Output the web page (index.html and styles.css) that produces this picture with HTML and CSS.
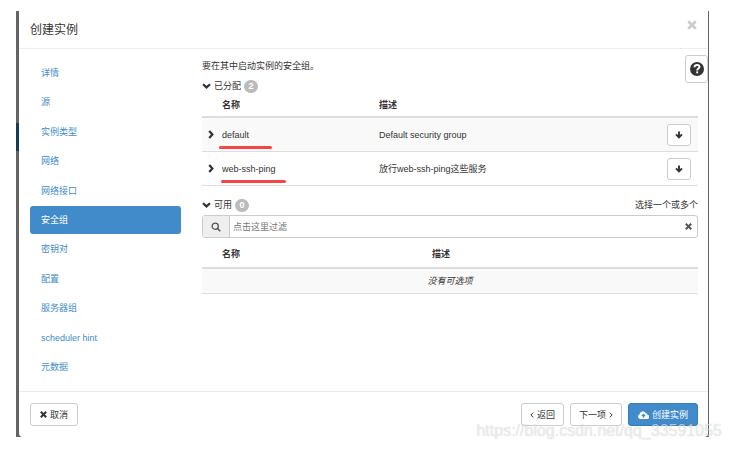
FILE: index.html
```html
<!DOCTYPE html>
<html lang="zh-CN">

    <head>
        <meta charset="UTF-8">
        <meta name="viewport" content="width=device-width, initial-scale=1.0">
        <title>创建实例</title>
        <link rel="stylesheet" href="styles.css">
    </head>

    <body>
        <div class="backdrop">
            <div class="modal">
                <header class="modal-header">
                    <h1>创建实例</h1>
                    <button type="button" class="close" aria-label="关闭">
                        <svg width="10" height="10" viewBox="0 0 10 10"><path d="M1.2 1.2l7.6 7.6M8.8 1.2L1.2 8.8" stroke="currentColor" stroke-width="2.8"/></svg>
                    </button>
                </header>

                <div class="modal-body">
                    <nav class="steps">
                        <a href="#">详情</a>
                        <a href="#">源</a>
                        <a href="#">实例类型</a>
                        <a href="#">网络</a>
                        <a href="#">网络接口</a>
                        <a href="#" class="active">安全组</a>
                        <a href="#">密钥对</a>
                        <a href="#">配置</a>
                        <a href="#">服务器组</a>
                        <a href="#">scheduler hint</a>
                        <a href="#">元数据</a>
                    </nav>

                    <main class="content">
                        <p class="intro">要在其中启动实例的安全组。</p>

                        <div class="section-title">
                            <svg width="9" height="6" viewBox="0 0 9 6"><path d="M1 1.2l3.5 3.2L8 1.2" fill="none" stroke="currentColor" stroke-width="2.2"/></svg>
                            <span>已分配</span>
                            <span class="badge">2</span>
                        </div>
                        <table class="allocated">
                            <thead>
                                <tr>
                                    <th class="expand"></th>
                                    <th class="name">名称</th>
                                    <th>描述</th>
                                    <th class="action"></th>
                                </tr>
                            </thead>
                            <tbody>
                                <tr class="odd">
                                    <td class="expand"><svg width="6" height="9" viewBox="0 0 6 9"><path d="M1.2 1l3.2 3.5L1.2 8" fill="none" stroke="currentColor" stroke-width="2.2"/></svg></td>
                                    <td class="name"><span class="marked">default</span></td>
                                    <td>Default security group</td>
                                    <td class="action">
                                        <button type="button" class="btn btn-move" aria-label="移除 default">
                                            <svg width="8" height="8" viewBox="0 0 8 8"><path d="M4 .4v6M1 3.4l3 3 3-3" fill="none" stroke="currentColor" stroke-width="1.9"/></svg>
                                        </button>
                                    </td>
                                </tr>
                                <tr>
                                    <td class="expand"><svg width="6" height="9" viewBox="0 0 6 9"><path d="M1.2 1l3.2 3.5L1.2 8" fill="none" stroke="currentColor" stroke-width="2.2"/></svg></td>
                                    <td class="name"><span class="marked marked-long">web-ssh-ping</span></td>
                                    <td>放行web-ssh-ping这些服务</td>
                                    <td class="action">
                                        <button type="button" class="btn btn-move" aria-label="移除 web-ssh-ping">
                                            <svg width="8" height="8" viewBox="0 0 8 8"><path d="M4 .4v6M1 3.4l3 3 3-3" fill="none" stroke="currentColor" stroke-width="1.9"/></svg>
                                        </button>
                                    </td>
                                </tr>
                            </tbody>
                        </table>

                        <div class="section-title section-available">
                            <svg width="9" height="6" viewBox="0 0 9 6"><path d="M1 1.2l3.5 3.2L8 1.2" fill="none" stroke="currentColor" stroke-width="2.2"/></svg>
                            <span>可用</span>
                            <span class="badge">0</span>
                            <span class="hint">选择一个或多个</span>
                        </div>
                        <div class="filter">
                            <label for="filter" aria-label="过滤">
                                <svg width="10" height="10" viewBox="0 0 10 10"><circle cx="4.2" cy="4.2" r="3.1" fill="none" stroke="currentColor" stroke-width="1.3"/><path d="M6.5 6.5l2.8 2.8" stroke="currentColor" stroke-width="1.6"/></svg>
                            </label>
                            <input type="text" id="filter" placeholder="点击这里过滤">
                            <button type="button" class="clear" aria-label="清除">
                                <svg width="7" height="7" viewBox="0 0 7 7"><path d="M.8 .8l5.4 5.4M6.2 .8L.8 6.2" stroke="currentColor" stroke-width="2"/></svg>
                            </button>
                        </div>
                        <table class="available">
                            <thead>
                                <tr>
                                    <th class="expand"></th>
                                    <th class="name">名称</th>
                                    <th>描述</th>
                                </tr>
                            </thead>
                            <tbody>
                                <tr class="odd">
                                    <td colspan="3" class="empty">没有可选项</td>
                                </tr>
                            </tbody>
                        </table>
                    </main>

                    <button type="button" class="btn help" aria-label="帮助">
                        <svg width="14" height="14" viewBox="0 0 14 14"><circle cx="7" cy="7" r="7" fill="currentColor"/><path d="M4.5 5.2c.1-1.5 1.1-2.2 2.5-2.2s2.5.8 2.5 2c0 1.6-2.3 1.6-2.3 3.4" fill="none" stroke="#fff" stroke-width="1.9"/><path d="M6.2 9.4h2v1.9h-2z" fill="#fff"/></svg>
                    </button>
                </div>

                <footer class="modal-footer">
                    <button type="button" class="btn cancel">
                        <svg width="7" height="7" viewBox="0 0 7 7"><path d="M.8 .8l5.4 5.4M6.2 .8L.8 6.2" stroke="currentColor" stroke-width="2"/></svg>
                        取消
                    </button>
                    <button type="button" class="btn">
                        <svg width="4" height="6" viewBox="0 0 4 6"><path d="M3.3 .6L.9 3l2.4 2.4" fill="none" stroke="currentColor"/></svg>
                        返回
                    </button>
                    <button type="button" class="btn">
                        下一项
                        <svg width="4" height="6" viewBox="0 0 4 6"><path d="M.7 .6L3.1 3 .7 5.4" fill="none" stroke="currentColor"/></svg>
                    </button>
                    <button type="submit" class="btn btn-primary">
                        <svg width="11" height="8" viewBox="0 0 11 8"><path d="M2.5 8A2.5 2.5 0 0 1 1.6 3.2 3.1 3.1 0 0 1 7.4 2 1.7 1.7 0 0 1 9.2 3.8 2.1 2.1 0 0 1 8.8 8z" fill="currentColor"/><path d="M5.5 2.4L3.2 4.9h1.5v1.9h1.6V4.9h1.5z" fill="#428bca"/></svg>
                        创建实例
                    </button>
                </footer>
            </div>
        </div>
        <div class="watermark">https://blog.csdn.net/qq_33591055</div>
    </body>

</html>
```

FILE: styles.css
```css
* {
    box-sizing: border-box;
}

body {
    margin: 0;
    padding: 11px 22px 12px 16px;
    position: relative;
    background: #fff;
    color: #333;
    font-family: "Liberation Sans", "Noto Sans CJK SC", sans-serif;
    font-size: 9px;
    line-height: 14px;
}

button,
input {
    font-family: inherit;
    font-size: inherit;
    line-height: inherit;
    color: inherit;
}

svg {
    display: block;
    flex: none;
}

.backdrop {
    border-right: 1px solid #646464;
    padding-left: 3px;
    background: linear-gradient(#646464 0 112px, #173b59 112px 140px, #646464 140px);
}

.modal {
    background: #fff;
    border-radius: 0 0 4px 4px;
}

.modal-header {
    display: flex;
    justify-content: space-between;
    align-items: center;
    height: 38px;
    padding: 0 11px;
    border-bottom: 1px solid #eee;
}

h1 {
    margin: 0;
    font-size: 12px;
    font-weight: normal;
    line-height: 16px;
}

.close,
.clear {
    display: flex;
    padding: 0;
    border: none;
    background: none;
    cursor: pointer;
}

.close {
    color: #ccc;
    margin-bottom: 10px;
}

.modal-body {
    position: relative;
    display: flex;
    gap: 21px;
    min-height: 342px;
    padding: 10px 10px 10px 11px;
}

.steps {
    display: flex;
    flex-direction: column;
    justify-content: space-between;
    flex: 0 0 151px;
}

.steps a {
    padding: 7px 11px;
    border-radius: 3px;
    color: #428bca;
    text-decoration: none;
}

.steps .active {
    background: #428bca;
    color: #fff;
}

.content {
    flex: 1;
}

.intro {
    margin: 0 0 6px;
}

.section-title {
    display: flex;
    align-items: center;
    gap: 3px;
}

.section-available {
    margin-top: 12px;
    margin-bottom: 3px;
}

.badge {
    min-width: 14px;
    padding: 0 4px;
    border-radius: 7px;
    background: #bbb;
    color: #fff;
    font-weight: bold;
    line-height: 13px;
    text-align: center;
}

.hint {
    margin-left: auto;
}

table {
    width: 100%;
    border-collapse: separate;
    border-spacing: 0;
    table-layout: fixed;
}

th,
td {
    padding: 0;
    text-align: left;
    border-bottom: 1px solid #ddd;
}

th {
    height: 25px;
    border-bottom-width: 2px;
}

.expand {
    width: 20px;
    padding-left: 6px;
}

.name {
    width: 157px;
}

.action {
    width: 31px;
}

.allocated td {
    height: 34px;
}

.available th {
    height: 31px;
    padding-top: 3px;
}

.available .name {
    width: 210px;
}

.available td {
    height: 25px;
}

.odd td {
    background: #f9f9f9;
}

.available .empty {
    font-style: italic;
    text-align: center;
}

/* red pen lines under the group names */
.marked {
    position: relative;
}

.marked::after {
    content: "";
    position: absolute;
    left: -3px;
    top: 16px;
    width: 53px;
    height: 3px;
    border-radius: 2px;
    background: #f54545;
}

.marked-long::after {
    left: -1px;
    width: 65px;
}

.filter {
    display: flex;
    align-items: center;
    height: 23px;
    padding-right: 5px;
    border: 1px solid #ccc;
    border-radius: 3px;
}

.filter label {
    display: flex;
    align-items: center;
    justify-content: center;
    align-self: stretch;
    width: 27px;
    border-right: 1px solid #ccc;
    background: #eee;
    color: #555;
}

.filter input {
    flex: 1;
    min-width: 0;
    padding: 0 3px;
    border: none;
    outline: none;
    background: none;
}

.filter input::placeholder {
    color: #777;
}

.clear {
    color: #555;
}

.btn {
    display: flex;
    align-items: center;
    justify-content: center;
    gap: 3px;
    height: 23px;
    padding: 0 8px;
    border: 1px solid #ccc;
    border-radius: 3px;
    background: #fff;
    cursor: pointer;
}

.btn-move {
    width: 24px;
    height: 22px;
    padding: 0;
}

.btn-primary {
    padding: 0 9px;
    border-color: #357ebd;
    background: #428bca;
    color: #fff;
}

.help {
    position: absolute;
    top: 6px;
    right: 0;
    width: 23px;
    height: 28px;
    padding: 0;
}

.modal-footer {
    display: flex;
    gap: 6px;
    padding: 11px 10px 11px 11px;
    border-top: 1px solid #eaeaea;
}

.cancel {
    padding: 0 9px;
    margin-right: auto;
}

.watermark {
    position: absolute;
    right: 9px;
    bottom: 9px;
    color: rgba(255, 255, 255, 0.6);
    font-size: 16px;
    line-height: 18px;
    text-shadow: 0 0 1px rgba(0, 0, 0, 0.22);
    pointer-events: none;
}
```
